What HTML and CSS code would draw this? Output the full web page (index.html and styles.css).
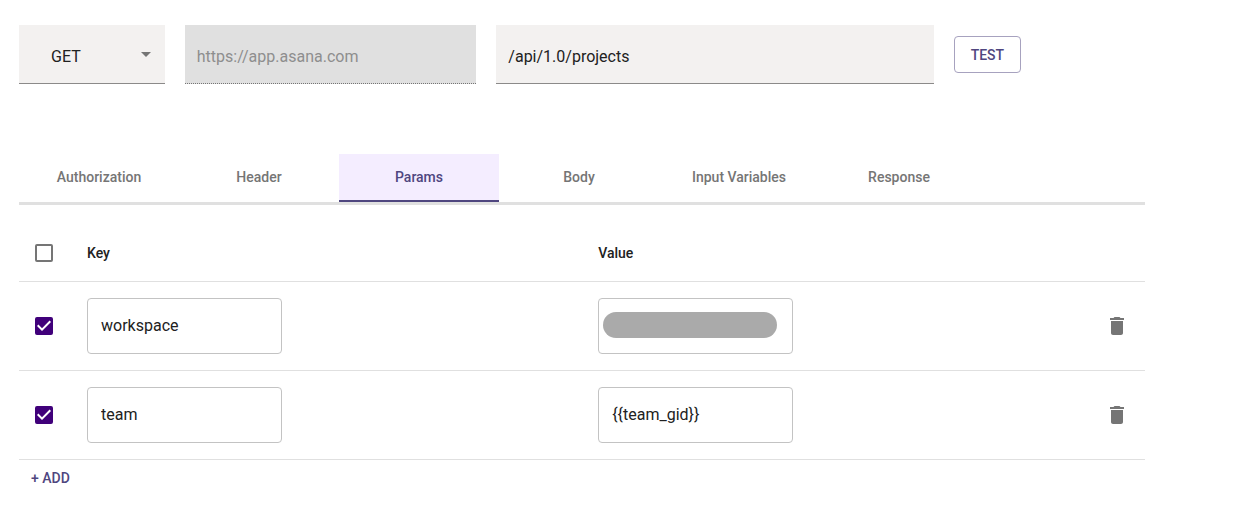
FILE: index.html
```html
<!DOCTYPE html>
<html lang="en">
<head>
<meta charset="utf-8">
<meta name="viewport" content="width=device-width, initial-scale=1">
<title>API request</title>
<link rel="stylesheet" href="styles.css">
</head>
<body>
<main class="page">
  <form class="request">
    <div class="method">
      <select class="field method-select" aria-label="Method">
        <option selected>GET</option>
        <option>POST</option>
        <option>PUT</option>
        <option>DELETE</option>
      </select>
      <svg class="method-arrow" viewBox="0 0 24 24" aria-hidden="true"><path d="M7 10l5 5 5-5z"/></svg>
    </div>
    <input class="field field-disabled" type="text" value="https://app.asana.com" aria-label="Host" disabled>
    <input class="field" type="text" value="/api/1.0/projects" aria-label="Path">
    <button class="test" type="button">TEST</button>
  </form>

  <div class="tabs" role="tablist">
    <button class="tab" type="button" role="tab">Authorization</button>
    <button class="tab" type="button" role="tab">Header</button>
    <button class="tab tab-active" type="button" role="tab" aria-selected="true">Params</button>
    <button class="tab" type="button" role="tab">Body</button>
    <button class="tab" type="button" role="tab">Input Variables</button>
    <button class="tab" type="button" role="tab">Response</button>
  </div>

  <table class="params">
    <thead>
      <tr>
        <th class="col-check"><span class="check"><input class="check-input" type="checkbox" aria-label="Select all"><svg class="check-mark" viewBox="3 3 18 18" aria-hidden="true"><path d="M10 17l-5-5 1.41-1.41L10 14.17l7.59-7.59L19 8z"/></svg></span></th>
        <th class="col-key" scope="col">Key</th>
        <th scope="col">Value</th>
        <th class="col-action"></th>
      </tr>
    </thead>
    <tbody>
      <tr>
        <td class="col-check"><span class="check"><input class="check-input" type="checkbox" aria-label="Select workspace" checked><svg class="check-mark" viewBox="3 3 18 18" aria-hidden="true"><path d="M10 17l-5-5 1.41-1.41L10 14.17l7.59-7.59L19 8z"/></svg></span></td>
        <td><input class="cell-input" type="text" value="workspace" aria-label="Key"></td>
        <td><div class="masked"><input class="cell-input" type="text" value="" aria-label="Value"><span class="mask"></span></div></td>
        <td><button class="delete" type="button" aria-label="Delete workspace"><svg class="delete-icon" viewBox="0 0 24 24" aria-hidden="true"><path d="M6 19c0 1.1.9 2 2 2h8c1.1 0 2-.9 2-2V7H6v12zM19 4h-3.500l-1-1h-5l-1 1H5v2h14V4z"/></svg></button></td>
      </tr>
      <tr>
        <td class="col-check"><span class="check"><input class="check-input" type="checkbox" aria-label="Select team" checked><svg class="check-mark" viewBox="3 3 18 18" aria-hidden="true"><path d="M10 17l-5-5 1.41-1.41L10 14.17l7.59-7.59L19 8z"/></svg></span></td>
        <td><input class="cell-input" type="text" value="team" aria-label="Key"></td>
        <td><input class="cell-input" type="text" value="{{team_gid}}" aria-label="Value"></td>
        <td><button class="delete" type="button" aria-label="Delete team"><svg class="delete-icon" viewBox="0 0 24 24" aria-hidden="true"><path d="M6 19c0 1.1.9 2 2 2h8c1.1 0 2-.9 2-2V7H6v12zM19 4h-3.500l-1-1h-5l-1 1H5v2h14V4z"/></svg></button></td>
      </tr>
    </tbody>
  </table>
  <button class="add" type="button">+ ADD</button>
</main>
</body>
</html>
```
FILE: styles.css
```css
:root {
  --accent: #4f467f;
  --purple: #40007a;
  --text: #212121;
  --muted: #757575;
  --line: #e0e0e0;
}

* {
  box-sizing: border-box;
}

body {
  margin: 0;
  background: #fff;
  color: var(--text);
  font-family: Roboto, "Liberation Sans", sans-serif;
  font-size: 14px;
}

button,
input,
select {
  margin: 0;
  font-family: inherit;
}

button {
  padding: 0;
  border: 0;
  background: none;
  color: var(--accent);
  font-size: 14px;
  font-weight: 500;
  cursor: pointer;
}

.page {
  padding: 25px 98px 19px 19px;
}

/* Request line */
.request {
  display: grid;
  grid-template-columns: 1fr 2fr 3fr auto;
  gap: 20px;
  align-items: center;
  width: 89%;
}

.field {
  width: 100%;
  min-width: 0;
  height: 59px;
  padding: 5px 12px 0;
  border: 0;
  border-bottom: 1px solid #8b8a89;
  border-radius: 0;
  background: #f3f1f0;
  color: var(--text);
  font-size: 16px;
}

.field-disabled {
  border-bottom: 1px dotted #757575;
  background: #e0e0e0;
  color: #8e8e8e;
}

.method {
  display: grid;
  align-items: center;
}

.method > * {
  grid-area: 1 / 1;
}

.method-select {
  padding-left: 32px;
  appearance: none;
}

.method-arrow {
  justify-self: end;
  width: 24px;
  height: 24px;
  margin: 0 7px 2px 0;
  fill: var(--muted);
  pointer-events: none;
}

.test {
  height: 37px;
  padding: 0 16px;
  border: 1px solid #a7a2bf;
  border-radius: 4px;
}

/* Tabs */
.tabs {
  display: flex;
  margin-top: 70px;
  border-bottom: 3px solid var(--line);
}

.tab {
  width: 160px;
  height: 48px;
  border-bottom: 2px solid transparent;
  color: var(--muted);
}

.tab-active {
  border-bottom-color: var(--accent);
  background: #f4edff;
  color: var(--accent);
}

/* Parameters */
.params {
  width: 100%;
  margin-top: 20px;
  border-collapse: separate;
  border-spacing: 0;
  table-layout: fixed;
}

.params th,
.params td {
  padding: 16px;
  border-bottom: 1px solid var(--line);
  text-align: left;
  vertical-align: middle;
}

.params th {
  height: 57px;
  font-weight: 500;
}

.params .col-check {
  width: 52px;
  padding-right: 0;
}

.col-key {
  width: 45.4%;
}

.col-action {
  width: 56px;
}

.check {
  display: grid;
  width: 18px;
  height: 18px;
}

.check > * {
  grid-area: 1 / 1;
}

.check-input {
  width: 18px;
  height: 18px;
  border: 2px solid var(--muted);
  border-radius: 2px;
  background: transparent;
  appearance: none;
}

.check-input:checked {
  border-color: var(--purple);
  background: var(--purple);
}

.check-mark {
  width: 18px;
  height: 18px;
  fill: #fff;
  pointer-events: none;
  visibility: hidden;
}

.check-input:checked + .check-mark {
  visibility: visible;
}

.cell-input {
  display: block;
  width: 195px;
  max-width: 100%;
  height: 56px;
  padding: 0 13px 2px;
  border: 1px solid #c3c3c3;
  border-radius: 4px;
  background: transparent;
  color: var(--text);
  font-size: 16px;
}

.masked {
  display: grid;
  align-items: center;
  width: 195px;
}

.masked > * {
  grid-area: 1 / 1;
}

.mask {
  height: 26px;
  margin: 0 16px 2px 5px;
  border-radius: 13px;
  background: #aaa;
}

.delete {
  display: block;
  width: 24px;
  height: 24px;
}

.delete-icon {
  display: block;
  width: 24px;
  height: 24px;
  fill: var(--muted);
}

.add {
  height: 36px;
  padding: 0 12px;
}
```
